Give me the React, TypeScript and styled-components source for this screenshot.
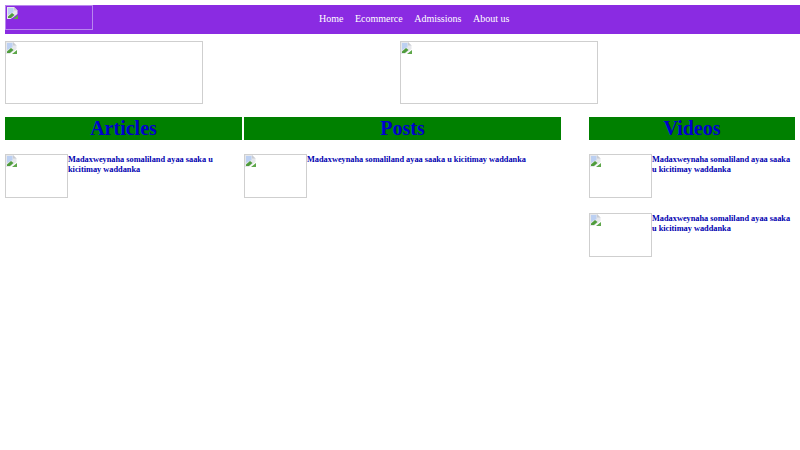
import React from "react";
import styled, { createGlobalStyle } from "styled-components";

const GlobalStyle = createGlobalStyle`
  html, body {
    margin: 0;
    padding: 0;
    background: #fff;
    font-family: "Liberation Serif", "Times New Roman", serif;
  }
`;

function BrokenIcon() {
  return (
    <Icon viewBox="0 0 11 12">
      <path d="M0 0H7L10.5 3.5V7L6 10.5L3.5 12H0Z" fill="#e6e8ec" />
      <path d="M7 0L10.5 3.5H7Z" fill="#c9ccd2" />
      <path d="M1 1H6.5V5L1 8Z" fill="#bcd0f2" />
      <path d="M1 9.5L5 6L7.5 8L4 11H1Z" fill="#4f9c3c" />
      <path d="M6 12L11 8V12Z" fill="#5ea74a" />
    </Icon>
  );
}

function Story() {
  return (
    <StoryRow>
      <Thumb>
        <BrokenIcon />
      </Thumb>
      <StoryTitle>Madaxweynaha somaliland ayaa saaka u kicitimay waddanka</StoryTitle>
    </StoryRow>
  );
}

function App() {
  return (
    <Page>
      <GlobalStyle />
      <NavBar>
        <Logo>
          <BrokenIcon />
        </Logo>
        <NavLinks>
          <NavLink>Home</NavLink>
          <NavLink>Ecommerce</NavLink>
          <NavLink>Admissions</NavLink>
          <NavLink>About us</NavLink>
        </NavLinks>
      </NavBar>
      <Banners>
        <Banner>
          <BrokenIcon />
        </Banner>
        <Banner>
          <BrokenIcon />
        </Banner>
      </Banners>
      <Columns>
        <Column $width={237}>
          <Heading>Articles</Heading>
          <Story />
        </Column>
        <Column $width={317}>
          <Heading>Posts</Heading>
          <Story />
        </Column>
        <Column $width={206} $offset={26}>
          <Heading>Videos</Heading>
          <Story />
          <Story />
        </Column>
      </Columns>
    </Page>
  );
}

const Page = styled.div`
  width: 800px;
  height: 450px;
  padding: 5px 0 0 5px;
  box-sizing: border-box;
  overflow: hidden;
`;

const Icon = styled.svg`
  display: block;
  width: 11px;
  height: 12px;
`;

const NavBar = styled.div`
  height: 29px;
  background: #8a2be2;
  display: flex;
  align-items: flex-start;
`;

const Logo = styled.div`
  width: 88px;
  height: 25px;
  box-sizing: border-box;
  border: 1px solid #b886ee;
  padding: 1px 0 0 1px;
`;

const NavLinks = styled.div`
  display: flex;
  gap: 11.5px;
  margin-left: 226px;
  padding-top: 7px;
`;

const NavLink = styled.span`
  color: #fff;
  font-size: 10px;
  line-height: 14px;
`;

const Banners = styled.div`
  display: flex;
  gap: 197.5px;
  margin-top: 7px;
`;

const Banner = styled.div`
  width: 197.5px;
  height: 63px;
  box-sizing: border-box;
  border: 1px solid #cfcfcf;
`;

const Columns = styled.div`
  display: flex;
  gap: 2px;
  margin-top: 13px;
`;

const Column = styled.div<{ $width: number; $offset?: number }>`
  flex: none;
  width: ${(p) => p.$width}px;
  margin-left: ${(p) => p.$offset ?? 0}px;
  display: flex;
  flex-direction: column;
  gap: 15px;
`;

const Heading = styled.div`
  height: 23px;
  margin-bottom: -1px;
  background: #008000;
  color: #0000cd;
  font-size: 20px;
  font-weight: bold;
  line-height: 23px;
  text-align: center;
`;

const StoryRow = styled.div`
  display: flex;
  align-items: flex-start;
  height: 44px;
`;

const Thumb = styled.div`
  flex: none;
  width: 63px;
  height: 44px;
  box-sizing: border-box;
  border: 1px solid #cfcfcf;
`;

const StoryTitle = styled.div`
  color: #0000b0;
  font-size: 8.3px;
  font-weight: bold;
  line-height: 10px;
  padding-top: 1px;
`;

export default App;
